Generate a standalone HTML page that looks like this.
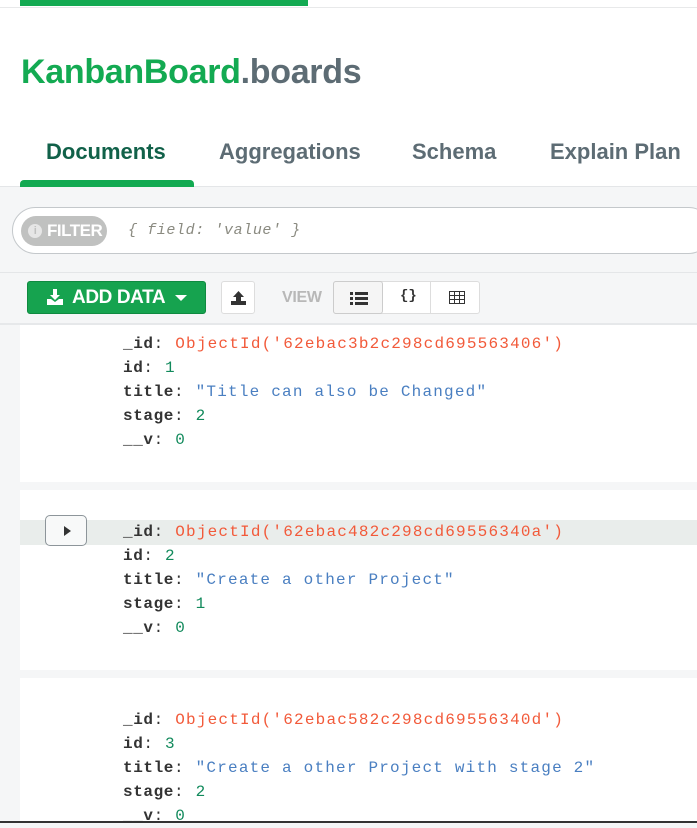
<!DOCTYPE html>
<html><head><style>
*{margin:0;padding:0;box-sizing:border-box}
body{width:697px;height:823px;overflow:hidden;background:#f5f6f7;font-family:"Liberation Sans",sans-serif;position:relative}
.top{position:absolute;left:0;top:0;width:697px;height:187px;background:#fff;border-bottom:1px solid #e4e6e8}
.gbar{position:absolute;left:20px;top:0;width:288px;height:6px;background:#13aa52}
.topline{position:absolute;left:0;top:7px;width:697px;height:1px;background:#e8e9ea}
.title{position:absolute;left:21px;top:53px;font-size:34px;font-weight:bold;letter-spacing:-0.3px;color:#13aa52}
.title span{color:#5d6c74}
.tab{position:absolute;top:139px;font-size:22px;font-weight:bold;color:#5d6c74}
.ul{position:absolute;left:20px;top:180px;width:174px;height:7px;background:#13aa52;border-radius:4px 4px 0 0}
.filter{position:absolute;left:12px;top:207px;width:700px;height:47px;background:#fff;border:1px solid #c4c8cb;border-radius:24px}
.fpill{position:absolute;left:21px;top:216px;width:86px;height:30px;border-radius:15px;background:#c0c1c0;color:#fff;font-weight:bold;font-size:17px;line-height:30px;padding-left:26px;letter-spacing:-0.5px}
.fpill i{position:absolute;left:7px;top:8px;width:14px;height:14px;border-radius:50%;background:#e6e6e6;color:#c0c1c0;font-style:normal;font-size:11px;line-height:14px;text-align:center}
.fph{position:absolute;left:128px;top:222px;font-family:"Liberation Mono",monospace;font-style:italic;font-size:15px;letter-spacing:0.6px;color:#8a8a80}
.sep{position:absolute;left:0;top:272px;width:697px;height:1px;background:#e4e6e8}
.add{position:absolute;left:27px;top:281px;width:179px;height:33px;background:#16a34f;border:1px solid #0f8a40;border-radius:3px;color:#fff;font-weight:bold;font-size:19px;line-height:31px;padding-left:44px;letter-spacing:-0.4px}
.btn{position:absolute;top:281px;height:33px;background:#fff;border:1px solid #ddd;border-radius:3px}
.view{position:absolute;left:282px;top:289px;font-weight:bold;font-size:16px;color:#b8b8b8;letter-spacing:-0.3px}
.card{position:absolute;left:20px;width:677px;background:#fff}
.code{position:absolute;left:123px;font-family:"Liberation Mono",monospace;font-size:16px;line-height:24px;letter-spacing:1.2px;color:#333}
.code b{color:#333;letter-spacing:0.6px}
.r{color:#f25a3a}.b{color:#4a7fc1}.n{color:#128a5c}
.hl{position:absolute;left:20px;top:520px;width:677px;height:25px;background:#e9edeb}
.exp{position:absolute;left:45px;top:515px;width:42px;height:31px;background:#f8f9f9;border:1px solid #8d959a;border-radius:5px}
.exp:after{content:"";position:absolute;left:18px;top:10px;border-left:7px solid #333;border-top:5px solid transparent;border-bottom:5px solid transparent}
</style></head><body>
<div class="top"></div>
<div class="gbar"></div><div class="topline"></div>
<div class="title">KanbanBoard<span>.boards</span></div>
<div class="tab" style="left:46px;color:#116149">Documents</div>
<div class="tab" style="left:219px">Aggregations</div>
<div class="tab" style="left:412px">Schema</div>
<div class="tab" style="left:550px">Explain Plan</div>
<div class="ul"></div>
<div class="filter"></div>
<div class="fpill"><i>i</i>FILTER</div>
<div class="fph">{ field: 'value' }</div>
<div class="sep"></div>
<div class="add"><svg style="position:absolute;left:18px;top:6px" width="18" height="18" viewBox="0 0 18 18"><path d="M7 1h4v6h3l-5 5-5-5h3z" fill="#fff"/><path d="M1 11h4l4 3 4-3h4v6H1z" fill="#fff"/></svg>ADD DATA<span style="position:absolute;left:147px;top:13px;border-top:6px solid #fff;border-left:6px solid transparent;border-right:6px solid transparent"></span></div>
<div class="btn" style="left:221px;width:34px"><svg style="position:absolute;left:8px;top:7px" width="17" height="17" viewBox="0 0 17 17"><path d="M6 14V8H3l5.5-6L14 8h-3v6z" fill="#333"/><rect x="1" y="12" width="15" height="4" fill="#333"/></svg></div>
<div class="view">VIEW</div>
<div class="btn" style="left:333px;width:147px;background:#fff"></div>
<div class="btn" style="left:333px;width:50px;background:#f5f5f5;border-color:#ccc"><svg style="position:absolute;left:16px;top:10px" width="18" height="13" viewBox="0 0 18 13"><g fill="#333"><rect x="0" y="0" width="3" height="3"/><rect x="0" y="5" width="3" height="3"/><rect x="0" y="10" width="3" height="3"/><rect x="5" y="0" width="13" height="3"/><rect x="5" y="5" width="13" height="3"/><rect x="5" y="10" width="13" height="3"/></g></svg></div>
<div style="position:absolute;left:400px;top:288px;font-family:'Liberation Mono',monospace;font-weight:bold;font-size:14px;color:#333">{}</div>
<div style="position:absolute;left:430px;top:282px;width:1px;height:31px;background:#ddd"></div>
<svg style="position:absolute;left:449px;top:291px" width="16" height="13" viewBox="0 0 16 13"><rect x="0.5" y="0.5" width="15" height="12" fill="none" stroke="#333"/><path d="M0 4.5h16M0 8.5h16M5.5 0v13M10.5 0v13" stroke="#333"/></svg>
<div style="position:absolute;left:0;top:323px;width:697px;height:2px;background:#e6e8ea"></div>
<div class="card" style="top:325px;height:157px"></div>
<div class="card" style="top:490px;height:180px"></div>
<div class="card" style="top:678px;height:145px"></div>
<div class="hl"></div>
<div class="exp"></div>
<div class="code" style="top:332px"><b>_id</b>: <span class="r">ObjectId('62ebac3b2c298cd695563406')</span><br><b>id</b>: <span class="n">1</span><br><b>title</b>: <span class="b">"Title can also be Changed"</span><br><b>stage</b>: <span class="n">2</span><br><b>__v</b>: <span class="n">0</span></div>
<div class="code" style="top:520px"><b>_id</b>: <span class="r">ObjectId('62ebac482c298cd69556340a')</span><br><b>id</b>: <span class="n">2</span><br><b>title</b>: <span class="b">"Create a other Project"</span><br><b>stage</b>: <span class="n">1</span><br><b>__v</b>: <span class="n">0</span></div>
<div class="code" style="top:708px"><b>_id</b>: <span class="r">ObjectId('62ebac582c298cd69556340d')</span><br><b>id</b>: <span class="n">3</span><br><b>title</b>: <span class="b">"Create a other Project with stage 2"</span><br><b>stage</b>: <span class="n">2</span><br><b>__v</b>: <span class="n">0</span></div>
<div style="position:absolute;left:0;top:821px;width:697px;height:2px;background:#333"></div>
</body></html>
